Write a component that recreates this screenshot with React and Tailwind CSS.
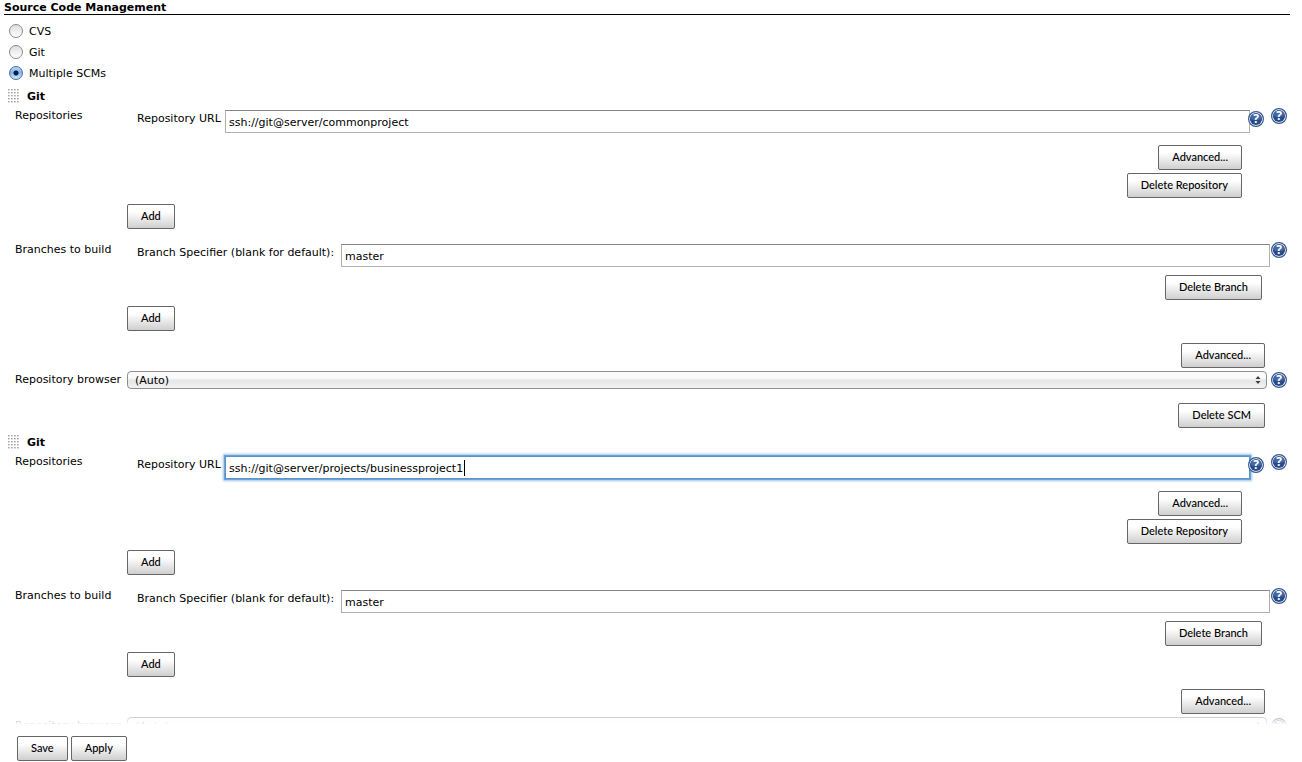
import React, { useState } from 'react';

const scmOptions = ['CVS', 'Git', 'Multiple SCMs'];

const repositories = [
  { id: 'common', url: 'ssh://git@server/commonproject', branch: 'master', active: false },
  { id: 'business', url: 'ssh://git@server/projects/businessproject1', branch: 'master', active: true }
];

function HelpLink({ label, className = '' }) {
  return (
    <a href="#help" aria-label={label} className={`block h-4 w-4 shrink-0 ${className}`}>
      <svg viewBox="0 0 16 16" className="block h-4 w-4">
        <circle cx="8" cy="8" r="7.4" fill="#ffffff" stroke="#35588f" strokeWidth="1.2" />
        <circle cx="8" cy="8" r="6.1" fill="#274b8a" />
        <path d="M2.3 8a5.7 5.7 0 0 1 11.4 0c-3 1-7 1.4-11.4 0z" fill="#5b7db5" opacity="0.6" />
        <text x="8" y="12.4" textAnchor="middle" fontSize="12" fontWeight="700" fontFamily="Open Sans, sans-serif" fill="#ffffff">?</text>
      </svg>
    </a>
  );
}

function FormButton({ children, className = '' }) {
  return (
    <button
      type="button"
      className={`block h-[25px] shrink-0 rounded-[2px] border border-[#666666] bg-linear-to-b from-white from-30% to-[#cfcfcf] px-[13px] pb-0.5 font-['Lato','Open_Sans',sans-serif] text-[11px] leading-4 font-medium whitespace-nowrap text-black ${className}`}
    >
      {children}
    </button>
  );
}

function DragHandle() {
  return (
    <svg viewBox="0 0 12 14" className="block h-[14px] w-3">
      {[0, 3, 6, 9, 12].map((y) =>
        [0, 3, 6, 9].map((x) => (
          <rect key={`${x}-${y}`} x={x} y={y} width="1.6" height="1.4" fill="#a3a3a3" />
        ))
      )}
    </svg>
  );
}

function TextField({ id, label, labelWidth, value, onChange, active }) {
  const border = active
    ? 'border-[#5b94cb] shadow-[0_0_0_1px_#6ba3d6,0_0_2px_2px_#9cc4e8]'
    : 'border-[#b0b0b0] border-t-[#858585]';

  return (
    <>
      <label htmlFor={id} className={`mt-px shrink-0 leading-4 whitespace-nowrap ${labelWidth}`}>{label}</label>
      <div className="relative min-w-0 flex-1">
        <input
          id={id}
          type="text"
          value={value}
          onChange={onChange}
          className={`block h-[23px] w-full border bg-white px-[3px] pt-px leading-[14px] outline-none ${border}`}
        />
        {active && <span className="absolute top-1 left-[239px] h-4 w-px bg-black"></span>}
      </div>
    </>
  );
}

function GitSection({ repo }) {
  const [url, setUrl] = useState(repo.url);
  const [branch, setBranch] = useState(repo.branch);

  return (
    <section className="pb-0.5">
      <div className="flex h-6 items-center gap-[7px] pl-2">
        <DragHandle />
        <h2 className="pt-0.5 font-bold">Git</h2>
      </div>

      <div className="pr-[15px] pl-[15px]">
        {/* Repositories */}
        <div className="flex items-start">
          <div className="w-[112px] shrink-0 leading-4">Repositories</div>
          <div className="min-w-0 flex-1">
            <div className="mt-0.5 flex items-start pr-[7px] pl-[10px]">
              <TextField
                id={`${repo.id}-url`}
                label="Repository URL"
                labelWidth="w-[88px]"
                value={url}
                onChange={(e) => setUrl(e.target.value)}
                active={repo.active}
              />
              <HelpLink label="Help for repository URL" className="relative mt-px -ml-0.5" />
            </div>
            <div className="mt-3 flex flex-col items-end gap-[3px] pr-[29px]">
              <FormButton>Advanced...</FormButton>
              <FormButton>Delete Repository</FormButton>
            </div>
            <FormButton className="mt-[6px]">Add</FormButton>
          </div>
          <HelpLink label="Help for repositories" />
        </div>

        {/* Branches */}
        <div className="mt-[13px] flex items-start">
          <div className="w-[112px] shrink-0 leading-4">Branches to build</div>
          <div className="min-w-0 flex-1">
            <div className="mt-0.5 flex items-start pr-px pl-[10px]">
              <TextField
                id={`${repo.id}-branch`}
                label="Branch Specifier (blank for default):"
                labelWidth="w-[204px]"
                value={branch}
                onChange={(e) => setBranch(e.target.value)}
              />
            </div>
            <div className="mt-2 flex justify-end pr-[9px]">
              <FormButton>Delete Branch</FormButton>
            </div>
            <FormButton className="mt-[6px]">Add</FormButton>
          </div>
          <HelpLink label="Help for branches" />
        </div>

        <div className="mt-3 flex justify-end pr-[22px]">
          <FormButton>Advanced...</FormButton>
        </div>

        {/* Repository browser */}
        <div className="mt-[3px] flex items-start">
          <label htmlFor={`${repo.id}-browser`} className="mt-px w-[112px] shrink-0 leading-4 whitespace-nowrap">
            Repository browser
          </label>
          <div className="relative mr-1 min-w-0 flex-1">
            <select
              id={`${repo.id}-browser`}
              className="block h-[18px] w-full appearance-none rounded-[4px] border border-[#8f8f8f] bg-linear-to-b from-[#fafafa] from-35% via-[#e6e6e6] via-55% to-[#f2f2f2] pt-0.5 pl-[7px] leading-[14px] outline-none"
            >
              <option>(Auto)</option>
            </select>
            <svg viewBox="0 0 6 8" className="pointer-events-none absolute top-[5px] right-[6px] h-2 w-[6px]">
              <path d="M3 0L5.5 3H0.5z M3 8L5.5 5H0.5z" fill="#3c3c3c" />
            </svg>
          </div>
          <HelpLink label="Help for repository browser" className="mt-px" />
        </div>
        <div className="mt-[14px] flex justify-end pr-[22px]">
          <FormButton>Delete SCM</FormButton>
        </div>
      </div>
    </section>
  );
}

function App() {
  const [scm, setScm] = useState('Multiple SCMs');

  return (
    <div className="flex h-screen flex-col bg-white font-['DejaVu_Sans',sans-serif] text-[11px] text-black">
      <main className="min-h-0 flex-1 overflow-y-auto [scrollbar-width:none]">
        <h1 className="mr-3 ml-1 h-[15px] border-b border-black leading-4 font-bold">Source Code Management</h1>

        <div className="mt-[5px] mb-px pl-[9px]">
          {scmOptions.map((option) => (
            <label key={option} className="flex h-[21px] items-center gap-[6px]">
              <input
                type="radio"
                name="scm"
                checked={scm === option}
                onChange={() => setScm(option)}
                className="h-[14px] w-[14px] appearance-none rounded-full border border-[#8a8a8a] bg-linear-to-b from-[#dedede] to-white checked:border-[#4a6a9c] checked:bg-[radial-gradient(circle,#0b1c3a_0_2px,transparent_3px),linear-gradient(#b9d6f7,#7fb5ee_45%,#c9eaff)]"
              />
              <span className="pt-1">{option}</span>
            </label>
          ))}
        </div>

        {repositories.map((repo) => (
          <GitSection key={repo.id} repo={repo} />
        ))}
      </main>

      <footer className="relative flex gap-[3px] bg-white pt-3 pb-px pl-[17px]">
        <div className="pointer-events-none absolute inset-x-0 -top-2 h-2 bg-linear-to-b from-white/50 to-white/95"></div>
        <FormButton>Save</FormButton>
        <FormButton>Apply</FormButton>
      </footer>
    </div>
  );
}

export default App;
